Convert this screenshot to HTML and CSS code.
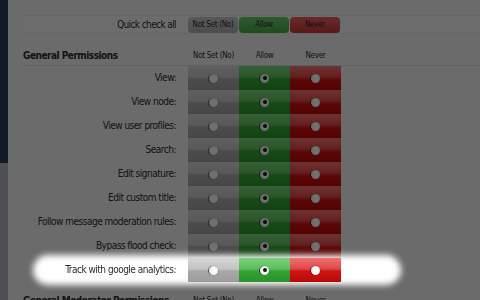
FILE: index.html
```html
<!DOCTYPE html>
<html lang="en">
<head>
  <meta charset="UTF-8">
  <title>Permissions</title>
  <link rel="stylesheet" href="styles.css">
</head>
<body>
  <div class="page">
    <div class="sidebar"></div>
    <div class="main">
      <div class="quick">
        <span class="quick-label">Quick check all</span>
        <span class="qbtn unset">Not Set (No)</span>
        <span class="qbtn allow">Allow</span>
        <span class="qbtn never">Never</span>
      </div>

      <div class="group-head">
        <h3>General Permissions</h3>
        <span class="col-head">Not Set (No)</span>
        <span class="col-head">Allow</span>
        <span class="col-head">Never</span>
      </div>

      <div class="perm"><label>View:</label><span class="cell unset"><i class="radio"></i></span><span class="cell allow"><i class="radio on"></i></span><span class="cell never"><i class="radio"></i></span></div>
      <div class="perm"><label>View node:</label><span class="cell unset"><i class="radio"></i></span><span class="cell allow"><i class="radio on"></i></span><span class="cell never"><i class="radio"></i></span></div>
      <div class="perm"><label>View user profiles:</label><span class="cell unset"><i class="radio"></i></span><span class="cell allow"><i class="radio on"></i></span><span class="cell never"><i class="radio"></i></span></div>
      <div class="perm"><label>Search:</label><span class="cell unset"><i class="radio"></i></span><span class="cell allow"><i class="radio on"></i></span><span class="cell never"><i class="radio"></i></span></div>
      <div class="perm"><label>Edit signature:</label><span class="cell unset"><i class="radio"></i></span><span class="cell allow"><i class="radio on"></i></span><span class="cell never"><i class="radio"></i></span></div>
      <div class="perm"><label>Edit custom title:</label><span class="cell unset"><i class="radio"></i></span><span class="cell allow"><i class="radio on"></i></span><span class="cell never"><i class="radio"></i></span></div>
      <div class="perm"><label>Follow message moderation rules:</label><span class="cell unset"><i class="radio"></i></span><span class="cell allow"><i class="radio on"></i></span><span class="cell never"><i class="radio"></i></span></div>
      <div class="perm"><label>Bypass flood check:</label><span class="cell unset"><i class="radio"></i></span><span class="cell allow"><i class="radio on"></i></span><span class="cell never"><i class="radio"></i></span></div>
      <div class="perm spotlight"><label>Track with google analytics:</label><span class="cell unset"><i class="radio"></i></span><span class="cell allow"><i class="radio on"></i></span><span class="cell never"><i class="radio"></i></span></div>

      <div class="group-head next">
        <h3>General Moderator Permissions</h3>
        <span class="col-head">Not Set (No)</span>
        <span class="col-head">Allow</span>
        <span class="col-head">Never</span>
      </div>
    </div>
  </div>
  <div class="dim"></div>
</body>
</html>
```

FILE: styles.css
```css
body { margin: 0; font-family: "DejaVu Sans Condensed", "DejaVu Sans", sans-serif; font-stretch: condensed; color: #2a2a2a; background: #eeeeee; overflow: hidden; }
.page { display: flex; height: 300px; }
.sidebar { width: 8px; flex: none; background: linear-gradient(#243852 0, #243852 163px, #aab0ba 163px); }
.main { flex: 1; padding: 15px 0 0 15px; white-space: nowrap; }

.quick {
  display: flex; align-items: center; height: 17px;
  border-top: 1px solid #e2e2e2; border-bottom: 1px solid #e2e2e2;
  background: #f0f0f0;
}
.quick-label { width: 153px; text-align: right; padding-right: 12px; font-size: 10px; letter-spacing: -0.6px; }
.qbtn {
  width: 50px; height: 16px; margin-right: 1px; border-radius: 4px;
  font-size: 8px; line-height: 16px; text-align: center; letter-spacing: -0.3px;
}
.qbtn.unset { background: linear-gradient(#c4c4c4, #aaaaaa); }
.qbtn.allow { background: linear-gradient(#6cc46c, #44a844); }
.qbtn.never { background: linear-gradient(#e26060, #c83434); }

.group-head { display: flex; align-items: flex-end; margin-top: 14px; height: 15px; padding-bottom: 2px; border-bottom: 1px solid #d4d4d4; }
.group-head.next { margin-top: 11px; }
.group-head h3 { margin: 0; width: 165px; font-size: 10px; font-weight: bold; line-height: 14px; letter-spacing: -0.5px; }
.col-head { width: 51px; text-align: center; font-size: 8px; line-height: 14px; letter-spacing: -0.3px; }

.perm { display: flex; height: 24px; align-items: stretch; }
.perm label { width: 153px; padding-right: 12px; text-align: right; font-size: 10px; line-height: 24px; letter-spacing: -0.5px; }
.cell { width: 51px; display: flex; align-items: center; justify-content: center; }
.cell.unset { background: linear-gradient(#d4d4d4 0, #c4c4c4 45%, #a8a8a8 55%, #9c9c9c 100%); }
.cell.allow { background: linear-gradient(#7ad07a 0, #5cc05c 45%, #34a234 55%, #2a922a 100%); }
.cell.never { background: linear-gradient(#f07070 0, #e04848 45%, #cc1414 55%, #bc0808 100%); }

.radio { width: 9px; height: 9px; border-radius: 50%; position: relative;
  background: radial-gradient(circle at 60% 55%, #ffffff 0, #f2f2f2 50%, #c8c8c8 100%);
  box-shadow: -1px 0 0 rgba(0,0,0,0.45), 0 0 0 0.5px rgba(0,0,0,0.25); }
.radio.on::after { content: ""; position: absolute; left: 2.5px; top: 2.5px; width: 4px; height: 4px; border-radius: 50%; background: #111; }

.dim { position: fixed; inset: 0; background: rgba(0,0,0,0.55); z-index: 1; }
.spotlight { position: relative; z-index: 2; }
.spotlight::before {
  content: ""; position: absolute; z-index: -1;
  left: 10px; top: -3px; width: 368px; height: 30px;
  border-radius: 15px; background: #ffffff; filter: blur(3px);
}
```
